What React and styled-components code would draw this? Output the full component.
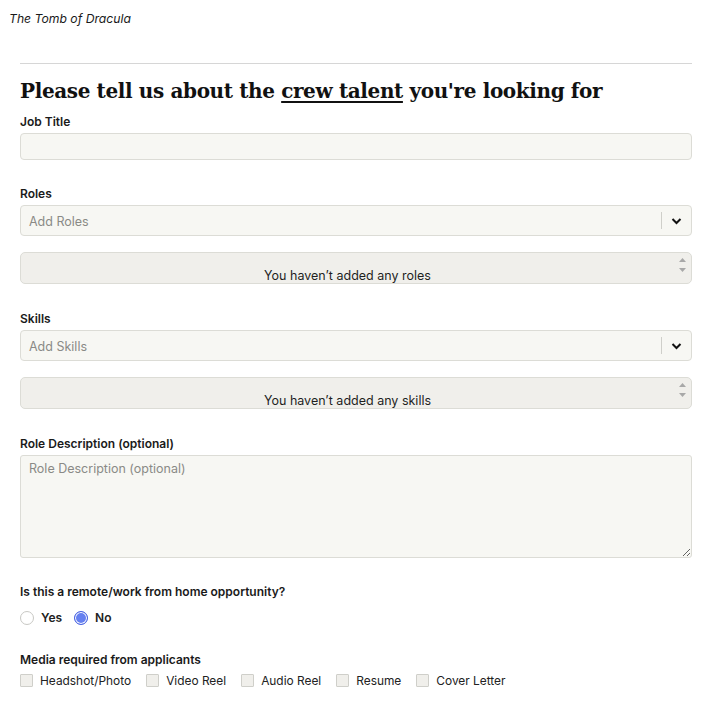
import React from 'react';
import styled, { createGlobalStyle } from 'styled-components';

const GlobalStyle = createGlobalStyle`
  body {
    margin: 0;
    background: #ffffff;
    font-family: Inter, "Noto Sans", sans-serif;
    color: #1a1a1a;
  }
`;

const Page = styled.div`
  padding: 10px 30px 30px 20px;
`;

const ShowTitle = styled.div`
  font-size: 12.2px;
  font-style: italic;
  margin: 0 0 0 -11px;
  line-height: 17px;
`;

const Rule = styled.hr`
  border: none;
  border-top: 1px solid #d6d6d6;
  margin: 36px 0 13px;
`;

const Heading = styled.h1`
  font-family: "DejaVu Serif", "Liberation Serif", serif;
  font-weight: 700;
  font-size: 20px;
  letter-spacing: -0.38px;
  margin: 0 0 9px;
  line-height: 28px;
  color: #111;

  u {
    text-decoration-thickness: 2px;
    text-underline-offset: 3px;
  }
`;

const Field = styled.div`
  display: flex;
  flex-direction: column;
  margin-bottom: ${p => p.$gap || 26}px;
`;

const Label = styled.label`
  font-size: 12px;
  font-weight: 600;
  line-height: 15px;
  margin-bottom: ${p => p.$space || 4}px;
`;

const TextInput = styled.input`
  height: 27px;
  box-sizing: border-box;
  border: 1px solid #dcdcd6;
  border-radius: 4px;
  background: #f7f7f3;
  font: inherit;
  outline: none;
`;

const SelectBox = styled.div`
  display: flex;
  align-items: center;
  height: 31px;
  box-sizing: border-box;
  border: 1px solid #dcdcd6;
  border-radius: 4px;
  background: #f7f7f3;
  margin-bottom: 16px;
`;

const Placeholder = styled.span`
  flex: 1;
  padding: 1px 0 0 8px;
  font-size: 12.5px;
  color: #8a8a86;
`;

const Divider = styled.span`
  width: 1px;
  height: 17px;
  background: #cfcfca;
`;

const Chevron = styled.span`
  width: 29px;
  display: flex;
  justify-content: center;
  align-items: center;
`;

const ListBox = styled.div`
  position: relative;
  height: 32px;
  box-sizing: border-box;
  border: 1px solid #dcdcd6;
  border-radius: 5px;
  background: #f0efeb;
  overflow: hidden;
  padding: 15px 17px 0 0;
  text-align: center;
  font-size: 12.5px;
  line-height: 15px;
  color: #1f1f1f;
`;

const Spinner = styled.div`
  position: absolute;
  right: 5px;
  top: 5px;
  display: flex;
  flex-direction: column;
  gap: 6px;
`;

const TextArea = styled.textarea`
  height: 103px;
  box-sizing: border-box;
  border: 1px solid #dcdcd6;
  border-radius: 3px;
  background: #f7f7f3;
  padding: 5px 8px;
  font-family: Inter, "Noto Sans", sans-serif;
  font-size: 12.5px;
  outline: none;

  &::placeholder {
    color: #8a8a86;
  }
`;

const OptionRow = styled.div`
  display: flex;
  align-items: center;
  gap: ${p => p.$gap || 10}px;
`;

const Option = styled.label`
  display: flex;
  align-items: center;
  gap: ${p => p.$gap || 7}px;
  font-size: ${p => (p.$bold ? 12 : 11.9)}px;
  font-weight: ${p => (p.$bold ? 600 : 400)};
  color: #222;
`;

const Radio = styled.span`
  width: 14px;
  height: 14px;
  border-radius: 50%;
  box-sizing: border-box;
  border: 1px solid ${p => (p.$on ? '#4a63e0' : '#c8c8c4')};
  background: ${p => (p.$on ? '#6680f0' : '#fff')};
  box-shadow: ${p => (p.$on ? 'inset 0 0 0 1px #ffffff' : 'none')};
`;

const Box = styled.span`
  width: 13px;
  height: 13px;
  box-sizing: border-box;
  border: 1px solid #cfcfca;
  border-radius: 1px;
  background: #f0efeb;
`;

const ChevronIcon = () => (
  <svg width="11" height="8" viewBox="0 0 11 8">
    <path d="M1.5 2 L5.5 6 L9.5 2" fill="none" stroke="#111" strokeWidth="2" />
  </svg>
);

const Arrows = () => (
  <Spinner>
    <svg width="7" height="4" viewBox="0 0 7 4"><path d="M0 4 L3.5 0 L7 4 Z" fill="#a8a8a8" /></svg>
    <svg width="7" height="4" viewBox="0 0 7 4"><path d="M0 0 L3.5 4 L7 0 Z" fill="#a8a8a8" /></svg>
  </Spinner>
);

const MultiSelect = ({ label, placeholder, empty }) => (
  <Field $gap={27}>
    <Label>{label}</Label>
    <SelectBox>
      <Placeholder>{placeholder}</Placeholder>
      <Divider />
      <Chevron><ChevronIcon /></Chevron>
    </SelectBox>
    <ListBox>
      {empty}
      <Arrows />
    </ListBox>
  </Field>
);

const media = ['Headshot/Photo', 'Video Reel', 'Audio Reel', 'Resume', 'Cover Letter'];

export default function App() {
  return (
    <>
      <GlobalStyle />
      <Page>
        <ShowTitle>The Tomb of Dracula</ShowTitle>
        <Rule />
        <Heading>
          Please tell us about the <u>crew talent</u> you're looking for
        </Heading>
        <Field $gap={26}>
          <Label>Job Title</Label>
          <TextInput />
        </Field>
        <MultiSelect label="Roles" placeholder="Add Roles" empty="You haven’t added any roles" />
        <MultiSelect label="Skills" placeholder="Add Skills" empty="You haven’t added any skills" />
        <Field $gap={26}>
          <Label>Role Description (optional)</Label>
          <TextArea placeholder="Role Description (optional)" />
        </Field>
        <Field $gap={27}>
          <Label $space={11}>Is this a remote/work from home opportunity?</Label>
          <OptionRow $gap={12}>
            <Option $bold $gap={7}><Radio />Yes</Option>
            <Option $bold $gap={7}><Radio $on />No</Option>
          </OptionRow>
        </Field>
        <Field>
          <Label $space={6}>Media required from applicants</Label>
          <OptionRow $gap={15}>
            {media.map(m => (
              <Option key={m} $gap={7}><Box />{m}</Option>
            ))}
          </OptionRow>
        </Field>
      </Page>
    </>
  );
}
